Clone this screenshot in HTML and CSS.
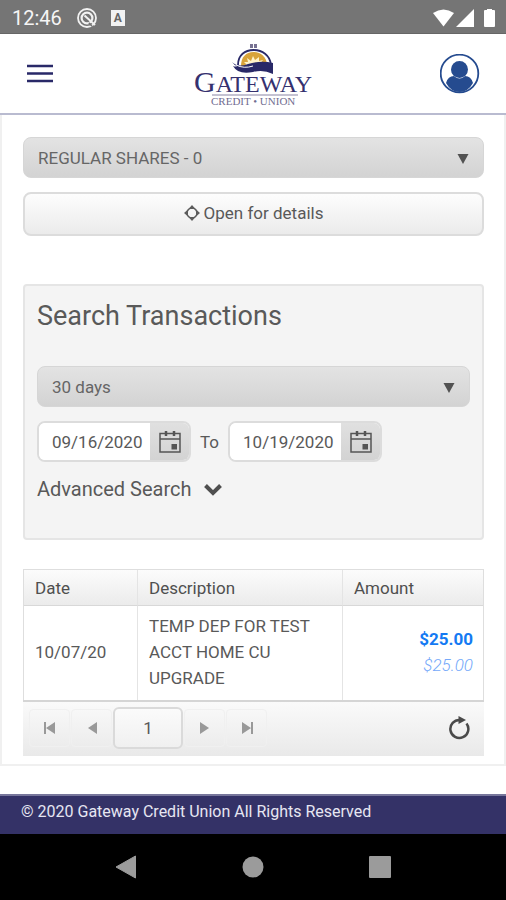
FILE: index.html
```html
<!DOCTYPE html>
<html lang="en">
<head>
<meta charset="utf-8">
<meta name="viewport" content="width=device-width, initial-scale=1">
<title>Gateway Credit Union</title>
<link rel="stylesheet" href="styles.css">
</head>
<body>
<div class="status-bar">
  <span class="clock">12:46</span>
  <svg class="status-at" width="20" height="20" viewBox="0 0 20 20" aria-hidden="true"><circle cx="10" cy="10" r="9" fill="none" stroke="#f2f2f2" stroke-width="1.8"/><circle cx="10" cy="10" r="5.4" fill="none" stroke="#f2f2f2" stroke-width="2.2"/><path d="M7.5 7.5 18 17" stroke="#f2f2f2" stroke-width="2"/><path d="m11.8 14.8 3.2 3.4" stroke="#757575" stroke-width="1.4"/></svg>
  <span class="status-badge">A</span>
  <svg class="status-signal" width="64" height="20" viewBox="0 0 64 20" fill="#fff" aria-hidden="true"><path d="M1 5Q11.500-2 22 5L11.500 18.500Z"/><path d="M24 19 42 1v18Z"/><path d="M53 2h2V1h5v1h2q1 0 1 1v15q0 1-1 1h-9q-1 0-1-1V3q0-1 1-1Z"/></svg>
</div>
<header class="app-header">
  <button class="icon-button" aria-label="Menu"><svg width="28" height="20" viewBox="0 0 28 20" aria-hidden="true"><path d="M1 2h26M1 9.500h26M1 17h26" stroke="#292968" stroke-width="2.600"/></svg></button>
  <a class="logo" href="#" aria-label="Gateway Credit Union">
    <svg width="122" height="64" viewBox="0 0 122 64">
      <path d="M58 2h3v4h-3zM62 2h3v4h-3z" fill="#777292"/>
      <path d="M46 23C46 13 53 8 61.500 8S78 13 79 23" fill="none" stroke="#292968" stroke-width="1.800"/>
      <path d="M49 24C49 15 54 10 61.500 10S74 15 75 22l-13 2Z" fill="#d8a33a"/>
      <path d="m53 25 1-3-2-2 4 0-1-4 4 3 2-5 2 4 4-3 0 4 4-1-3 4 3 1-8 3Z" fill="#fff3c9"/>
      <path d="M40 20q6 6 16 2 13-4 25-1v11q-10-5-20-2-15 3-20-6 3 1 4 0-3-1-5-4Z" fill="#292968"/>
      <path d="M44 23q8 4 17 1" fill="none" stroke="#fff" stroke-width="1"/>
      <text class="logo-name" x="2" y="50"><tspan class="logo-cap">G</tspan>ATEWAY</text>
      <path d="M20 53h86" stroke="#8985a5" stroke-width="1"/>
      <text class="logo-sub" x="19" y="63">CREDIT • UNION</text>
    </svg>
  </a>
  <button class="icon-button" aria-label="Profile"><svg width="40" height="40" viewBox="0 0 40 40" aria-hidden="true"><circle cx="19.500" cy="19.500" r="18.800" fill="#fff" stroke="#254b8f" stroke-width="1.800"/><path d="M6 29q2-7 8-7 5.500 5 11 0 6 0 8 7-5 9-13.500 9T6 29Z" fill="#254b8f"/><circle cx="19.500" cy="15.500" r="8.500" fill="#254b8f"/></svg></button>
</header>
<main class="account">
  <div class="select-wrap"><select aria-label="Account"><option>REGULAR SHARES - 0</option></select><svg width="12" height="10" viewBox="0 0 12 10" aria-hidden="true"><path d="M.5 0h11L6 10Z" fill="#525252"/></svg></div>
  <button class="details-button"><svg width="16" height="16" viewBox="0 0 16 16" aria-hidden="true"><path d="m8 0 3.500 4h-7ZM8 16l3.500-4h-7ZM0 8l4-3.500v7ZM16 8l-4-3.500v7Z" fill="#5c5c5c"/><circle cx="8" cy="8" r="5" fill="none" stroke="#5c5c5c" stroke-width="1.500"/></svg>Open for details</button>
  <section class="search-panel">
    <h1>Search Transactions</h1>
    <div class="select-wrap"><select aria-label="Period"><option>30 days</option></select><svg width="12" height="10" viewBox="0 0 12 10" aria-hidden="true"><path d="M.5 0h11L6 10Z" fill="#525252"/></svg></div>
    <div class="date-range">
      <div class="date-field"><input type="text" aria-label="From date" value="09/16/2020"><button aria-label="Choose from date"><svg width="22" height="24" viewBox="0 0 22 24" fill="none" stroke="#555" stroke-width="1.500" aria-hidden="true"><path d="M1 3.500h20V22H1ZM1 9h20"/><path d="M7 1v5M15 1v5" stroke-width="2.500"/><path d="M12.500 14h5.500v5.500h-5.500Z" fill="#555" stroke="none"/></svg></button></div>
      <span>To</span>
      <div class="date-field"><input type="text" aria-label="To date" value="10/19/2020"><button aria-label="Choose to date"><svg width="22" height="24" viewBox="0 0 22 24" fill="none" stroke="#555" stroke-width="1.500" aria-hidden="true"><path d="M1 3.500h20V22H1ZM1 9h20"/><path d="M7 1v5M15 1v5" stroke-width="2.500"/><path d="M12.500 14h5.500v5.500h-5.500Z" fill="#555" stroke="none"/></svg></button></div>
    </div>
    <button class="advanced">Advanced Search<svg width="18" height="14" viewBox="0 0 18 14" aria-hidden="true"><path d="m1.500 3.500 7.500 7.500 7.500-7.500" fill="none" stroke="#4f4f4f" stroke-width="4"/></svg></button>
  </section>
  <section class="transactions">
    <table>
      <thead><tr><th class="col-date">Date</th><th class="col-description">Description</th><th>Amount</th></tr></thead>
      <tbody><tr><td>10/07/20</td><td>TEMP DEP FOR TEST ACCT HOME CU UPGRADE</td><td class="amount"><strong>$25.00</strong><em>$25.00</em></td></tr></tbody>
    </table>
    <nav class="pager" aria-label="Pages">
      <button aria-label="First page"><svg width="12" height="12" viewBox="0 0 12 12" aria-hidden="true"><path d="M0 0h2v12H0ZM11 0v12L2 6Z" fill="#999"/></svg></button>
      <button aria-label="Previous page"><svg width="12" height="12" viewBox="0 0 12 12" aria-hidden="true"><path d="M11 0v12L2 6Z" fill="#999"/></svg></button>
      <input type="text" aria-label="Page" value="1">
      <button aria-label="Next page"><svg width="12" height="12" viewBox="0 0 12 12" aria-hidden="true"><path d="M1 0v12l9-6Z" fill="#999"/></svg></button>
      <button aria-label="Last page"><svg width="12" height="12" viewBox="0 0 12 12" aria-hidden="true"><path d="M10 0h2v12h-2ZM1 0v12l9-6Z" fill="#999"/></svg></button>
      <button class="refresh" aria-label="Refresh"><svg width="22" height="24" viewBox="0 0 22 24" aria-hidden="true"><path d="M12 4A9 9 0 1 0 18.500 7.500" fill="none" stroke="#4a4a4a" stroke-width="2.500"/><path d="m10.500 0 7.500 4-7.500 4Z" fill="#4a4a4a"/></svg></button>
    </nav>
  </section>
</main>
<footer class="copyright">© 2020 Gateway Credit Union All Rights Reserved</footer>
<nav class="system-nav" aria-label="System">
  <button aria-label="Back"><svg width="22" height="24" viewBox="0 0 22 24" aria-hidden="true"><path d="M20.500 1v22L1 12Z" fill="#9b9b9b" stroke="#9b9b9b" stroke-linejoin="round"/></svg></button>
  <button aria-label="Home"><svg width="22" height="24" viewBox="0 0 22 24" aria-hidden="true"><circle cx="11" cy="12" r="10.500" fill="#9b9b9b"/></svg></button>
  <button aria-label="Recent apps"><svg width="22" height="24" viewBox="0 0 22 24" aria-hidden="true"><rect y="1" width="22" height="22" rx="1" fill="#9b9b9b"/></svg></button>
</nav>
</body>
</html>
```
FILE: styles.css
```css
* { box-sizing: border-box; }
body {
  margin: 0;
  min-height: 100vh;
  display: flex;
  flex-direction: column;
  background: #fff;
  color: #595959;
  font: 17px/26px Roboto, sans-serif;
}
button, input, select { font: inherit; color: inherit; margin: 0; }
button { padding: 0; border: 0; background: none; }
svg { display: block; flex-shrink: 0; }
.status-bar {
  height: 34px;
  padding: 2px 10px 0 12px;
  display: flex;
  align-items: center;
  background: #757575;
  color: #f5f5f5;
  font-size: 20px;
  border-bottom: 1px solid #666;
}
.status-at { margin-left: 15px; }
.status-badge {
  width: 14px;
  height: 16px;
  margin-left: 14px;
  background: #f2f2f2;
  color: #666;
  font-size: 12px;
  font-weight: 700;
  line-height: 16px;
  text-align: center;
}
.status-signal { margin-left: auto; }
.app-header {
  height: 81px;
  padding: 0 26px;
  display: grid;
  grid-template-columns: 1fr auto 1fr;
  align-items: center;
  border-bottom: 2px solid #b9bbd0;
}
.app-header > :last-child { justify-self: end; }
.app-header > :first-child { justify-self: start; }
.logo-name { font: 24px "Liberation Serif", serif; fill: #35316f; }
.logo-cap { font-size: 30px; }
.logo-sub { font: 11px "Liberation Serif", serif; fill: #716d91; }
.account {
  padding: 22px 20px 8px 21px;
  border: solid #f0f0f0;
  border-width: 0 2px 2px;
}
.select-wrap { position: relative; }
.select-wrap select {
  appearance: none;
  display: block;
  width: 100%;
  height: 41px;
  padding: 0 14px;
  border: 1px solid #d6d6d6;
  border-radius: 8px;
  background: linear-gradient(#e3e3e3, #d3d3d3);
  color: #666;
}
.select-wrap svg { position: absolute; right: 15px; top: 17px; }
.details-button {
  width: 100%;
  height: 44px;
  margin-top: 14px;
  padding-bottom: 2px;
  display: flex;
  align-items: center;
  justify-content: center;
  gap: 4px;
  border: 2px solid #dcdcdc;
  border-radius: 8px;
  background: linear-gradient(#fdfdfd, #ebebeb);
}
.search-panel {
  margin-top: 48px;
  padding: 13px 12px 36px;
  border: 2px solid #e5e5e5;
  border-radius: 4px;
  background: #f4f4f4;
}
h1 { margin: 0 0 33px; font-size: 27px; font-weight: 400; line-height: 34px; }
.date-range { display: flex; align-items: center; gap: 9px; margin-top: 14px; }
.date-field {
  display: flex;
  width: 154px;
  height: 41px;
  border: 2px solid #dcdcdc;
  border-radius: 8px;
  overflow: hidden;
  background: #fff;
}
.date-field input { flex: 1; min-width: 0; padding: 0 0 0 13px; border: 0; background: #fff; }
.date-field button {
  width: 39px;
  display: grid;
  place-items: center;
  background: linear-gradient(#e0e0e0, #d3d3d3);
}
.advanced { display: flex; align-items: center; gap: 12px; margin-top: 14px; font-size: 20px; }
.transactions { margin-top: 29px; }
table {
  width: 100%;
  table-layout: fixed;
  border-collapse: separate;
  border-spacing: 0;
  border: solid #dedede;
  border-width: 1px 1px 0;
}
th, td { padding: 4px 11px; text-align: left; border-right: 1px solid #e4e4e4; }
th:last-child, td:last-child { border-right: 0; }
th { padding-top: 5px; border-bottom: 1px solid #d8d8d8; background: linear-gradient(#fcfcfc, #ebebeb); color: #4f4f4f; font-weight: 400; }
td { padding: 7px 11px 9px; }
.col-date { width: 114px; }
.col-description { width: 205px; }
td.amount { padding-right: 10px; text-align: right; }
.amount strong, .amount em { display: block; }
.amount strong { color: #147af3; }
.amount em { color: #75a9fa; font-weight: 300; }
.pager {
  display: flex;
  align-items: center;
  gap: 1px;
  height: 56px;
  padding: 0 14px 2px 6px;
  border-top: 2px solid #d5d5d5;
  background: linear-gradient(#fafafa, #e9e9e9);
}
.pager button:not(.refresh) {
  width: 41px;
  height: 38px;
  display: grid;
  place-items: center;
  border: 1px solid #f0f0f0;
  border-radius: 4px;
}
.pager input {
  width: 70px;
  height: 42px;
  padding: 0;
  border: 2px solid #dadada;
  border-radius: 6px;
  background: linear-gradient(#fbfbfb, #f0f0f0);
  text-align: center;
}
.pager .refresh { margin-left: auto; }
.copyright {
  height: 40px;
  margin-top: 28px;
  padding: 0 21px;
  border-top: 2px solid #77769b;
  background: #343267;
  color: #e6e6f2;
  font-size: 16px;
  line-height: 32px;
}
.system-nav {
  flex: 1;
  padding: 0 63px;
  display: flex;
  align-items: center;
  justify-content: space-around;
  background: #000;
}
```
